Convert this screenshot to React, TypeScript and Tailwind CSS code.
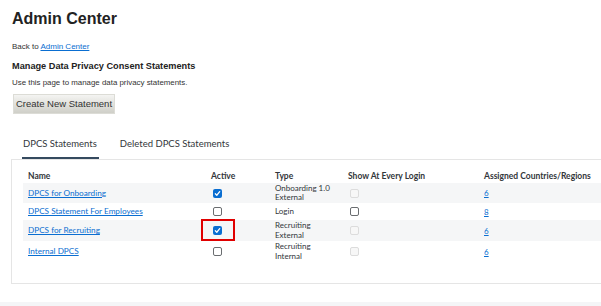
import React from 'react'

const rows = [
  { name: 'DPCS for Onboarding', active: true, type: ['Onboarding 1.0', 'External'], show: 'disabled', count: '6', h: 'h-[20px]', bg: 'bg-[#f5f6f7]' },
  { name: 'DPCS Statement For Employees', active: false, type: ['Login'], show: 'enabled', count: '8', h: 'h-[17px]', bg: 'bg-white' },
  { name: 'DPCS for Recruiting', active: true, type: ['Recruiting', 'External'], show: 'disabled', count: '6', h: 'h-[21px]', bg: 'bg-[#f5f6f7]', mark: true },
  { name: 'Internal DPCS', active: false, type: ['Recruiting', 'Internal'], show: 'disabled', count: '6', h: 'h-[21px]', bg: 'bg-white' },
]

function Box({ state }: { state: 'checked' | 'enabled' | 'disabled' }) {
  if (state === 'checked') {
    return (
      <span className="flex h-[9px] w-[9px] items-center justify-center rounded-[2px] bg-[#0a6ed1]">
        <svg width="7" height="7" viewBox="0 0 8 8">
          <path d="M1.5 4.3 L3.2 6 L6.5 1.8" fill="none" stroke="white" strokeWidth="1.4" strokeLinecap="round" strokeLinejoin="round" />
        </svg>
      </span>
    )
  }
  if (state === 'enabled') {
    return <span className="block h-[9px] w-[9px] rounded-[2px] border border-[#6a6d70] bg-white" />
  }
  return <span className="block h-[9px] w-[9px] rounded-[2px] border border-[#dcdcdc] bg-[#f7f7f7]" />
}

export default function App() {
  return (
    <div className="relative h-[306px] w-[601px] overflow-hidden bg-white text-[#32363a]" style={{ fontFamily: '"Liberation Sans", Arial, sans-serif' }}>
      <div className="pl-[12px] pt-[9px]">
        <h1 className="text-[16px] font-bold leading-[20px] text-[#222]">Admin Center</h1>
        <p className="mt-[13px] text-[8px] leading-[10px] text-[#333]">
          Back to <a className="text-[#0a6ed1] underline">Admin Center</a>
        </p>
        <h2 className="mt-[8px] text-[9.2px] font-bold leading-[12px] text-[#222]">Manage Data Privacy Consent Statements</h2>
        <p className="mt-[6px] text-[7.9px] leading-[10px] text-[#333]">Use this page to manage data privacy statements.</p>
        <button className="ml-px mt-[6px] h-[20px] w-[102px] border border-[#dcdcd6] bg-gradient-to-b from-[#f4f4f2] to-[#cfcfc8] text-[9.5px] text-[#333]">
          Create New Statement
        </button>
      </div>

      <div className="mt-[24px] flex whitespace-nowrap pl-[22px] text-[9.5px] leading-[12px] text-[#32363a]" style={{ fontFamily: 'Lato, sans-serif' }}>
        <div className="border-b-[2px] border-[#354a5f] pb-[7px] pl-px pr-[2px]">DPCS Statements</div>
        <div className="ml-[21px]">Deleted DPCS Statements</div>
      </div>

      <div className="ml-[11px] h-[125px] border border-r-0 border-[#e5e5e5] pl-[11px] pt-[10px] text-[8px]" style={{ fontFamily: 'Lato, sans-serif' }}>
        <div className="grid h-[13px] grid-cols-[183px_64px_73px_136px_1fr] items-center whitespace-nowrap text-[8.5px] font-bold">
          <div className="pl-[5px]">Name</div>
          <div className="pl-[5px]">Active</div>
          <div className="pl-[5px]">Type</div>
          <div className="pl-[5px]">Show At Every Login</div>
          <div className="pl-[5px]">Assigned Countries/Regions</div>
        </div>
        {rows.map(r => (
          <div key={r.name} className={`grid grid-cols-[183px_64px_73px_136px_1fr] items-center ${r.h} ${r.bg}`}>
            <div className="pl-[5px]"><a className="text-[8.2px] text-[#0a6ed1] underline">{r.name}</a></div>
            <div className="relative pl-[7px]">
              <Box state={r.active ? 'checked' : 'enabled'} />
              {r.mark && <span className="absolute left-[-5px] top-[-7px] h-[22px] w-[34px] border-[2.5px] border-[#e00000]" />}
            </div>
            <div className="pl-[5px] leading-[9.5px] text-[#32363a]">
              {r.type.map(t => <div key={t}>{t}</div>)}
            </div>
            <div className="pl-[7px]"><Box state={r.show as 'enabled' | 'disabled'} /></div>
            <div className="pl-[5px]"><a className="text-[#0a6ed1] underline">{r.count}</a></div>
          </div>
        ))}
      </div>

      <div className="absolute bottom-0 left-0 h-[4px] w-full bg-[#f4f5f7]" />
    </div>
  )
}
